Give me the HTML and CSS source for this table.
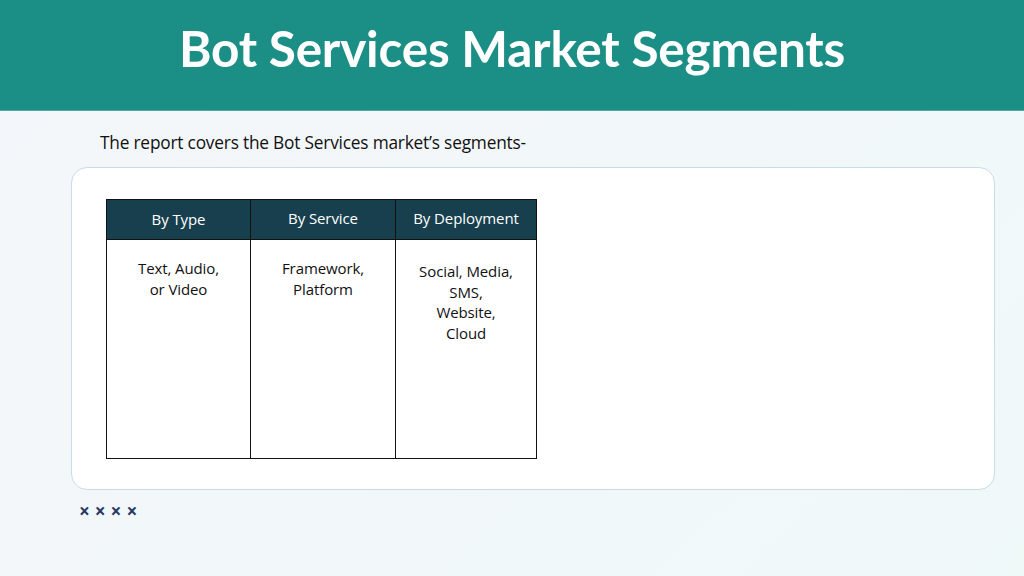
FILE: index.html
```html
<!DOCTYPE html>
<html>
<head>
<meta charset="utf-8">
<link rel="stylesheet" href="styles.css">
</head>
<body>
<header class="banner">
  <h1 class="title">Bot Services Market Segments</h1>
</header>
<main class="content">
  <p class="intro">The report covers the Bot Services market’s segments-</p>
  <section class="card">
    <table class="seg">
      <thead>
        <tr><th>By Type</th><th class="up">By Service</th><th class="up">By Deployment</th></tr>
      </thead>
      <tbody>
        <tr>
          <td>Text, Audio,<br>or Video</td>
          <td class="up">Framework,<br>Platform</td>
          <td class="down">Social, Media,<br>SMS,<br>Website,<br>Cloud</td>
        </tr>
      </tbody>
    </table>
  </section>
  <div class="marks">× × × ×</div>
</main>
</body>
</html>
```
FILE: styles.css
```css
html, body { margin: 0; padding: 0; }
body {
  width: 1024px;
  height: 576px;
  overflow: hidden;
  font-family: "Open Sans", "Liberation Sans", sans-serif;
  background: linear-gradient(135deg, #f3f6fa 0%, #f2f7f9 50%, #eff9f8 100%);
}
.banner {
  height: 110px;
  background: #1b8f86;
  border-bottom: 1px solid #4fa9a2;
  display: flex;
  align-items: center;
  justify-content: center;
}
.title {
  margin: 0;
  margin-top: -14px;
  color: #ffffff;
  font-family: Lato, "Open Sans", sans-serif;
  font-weight: 700;
  font-size: 49.5px;
  letter-spacing: -0.2px;
}
.content {
  padding: 0 29px 0 71px;
}
.intro {
  margin: 21px 0 0 29px;
  font-size: 17.3px;
  line-height: 22px;
  color: #111;
  letter-spacing: -0.2px;
}
.card {
  margin-top: 13px;
  width: 924px;
  height: 323px;
  box-sizing: border-box;
  background: #fff;
  border: 1px solid #c8dbe8;
  border-radius: 16px;
  padding: 31px 0 0 34px;
}
.seg {
  border-collapse: collapse;
  font-size: 15px;
  letter-spacing: -0.1px;
}
.seg th, .seg td {
  border: 1px solid #111;
  text-align: center;
}
.seg th {
  background: #173f4d;
  color: #fff;
  font-weight: 400;
  height: 40px;
  padding: 0 0 1px 0;
  box-sizing: border-box;
  line-height: 20px;
}
.seg th.up { padding: 0 0 4px 0; }
.seg th:nth-child(1) { width: 144px; }
.seg th:nth-child(2) { width: 145px; }
.seg th:nth-child(3) { width: 141px; }
.seg td {
  height: 219px;
  vertical-align: top;
  color: #111;
  line-height: 20.5px;
  padding: 18px 2px 0;
  box-sizing: border-box;
}
.seg td.down { padding-top: 21px; }
.marks {
  margin: 10px 0 0 8px;
  font-size: 19px;
  font-weight: 700;
  color: #283a66;
  letter-spacing: 0px;
  line-height: 22px;
}
```
